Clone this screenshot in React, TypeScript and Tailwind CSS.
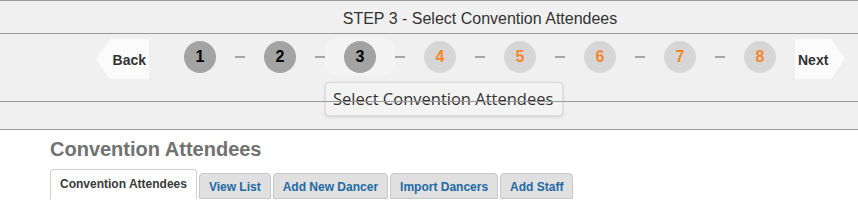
import React from 'react';

const steps = [1, 2, 3, 4, 5, 6, 7, 8];
const current = 3;

const tabs = ['Convention Attendees', 'View List', 'Add New Dancer', 'Import Dancers', 'Add Staff'];

function StepCircle({ n }: { n: number }) {
  const done = n <= current;
  const circle = (
    <div
      className={
        done
          ? 'w-[32px] h-[32px] rounded-full bg-[#a3a3a3] text-black flex items-center justify-center text-[16px] font-bold'
          : 'w-[32px] h-[32px] rounded-full bg-[#d6d6d6] text-[#f7862b] flex items-center justify-center text-[16px] font-bold'
      }
    >
      {n}
    </div>
  );
  if (n === current) {
    return (
      <div className="-mx-[19px] -my-[3px] px-[19px] py-[3px] rounded-xl bg-[#f4f4f4]">{circle}</div>
    );
  }
  return circle;
}

function Wizard() {
  return (
    <div className="relative bg-[#f0f0f0] border-t border-b border-[#999]">
      <div className="h-[33px] pt-[9px] pl-[102px] flex justify-center text-[16px] leading-[18px] text-[#333] border-b border-[#999]">
        STEP 3 - Select Convention Attendees
      </div>
      <div className="relative z-10 h-[68px] border-b border-[#999] pl-[96px] pt-[5px] flex items-start">
        <div className="w-[53px] h-[40px] bg-[#fbfbfb] [clip-path:polygon(14px_0,100%_0,100%_100%,14px_100%,0_50%)] flex items-center justify-end pr-[3px] pt-[2px] text-[14px] font-bold text-[#333]">
          Back
        </div>
        <div className="ml-[35px] mt-[2px] flex items-center">
          {steps.map((n, i) => (
            <React.Fragment key={n}>
              {i > 0 && <div className="mx-[19px] w-[10px] h-[2px] bg-[#a5a5a5]" />}
              <StepCircle n={n} />
            </React.Fragment>
          ))}
        </div>
        <div className="ml-[19px] w-[50px] h-[40px] bg-[#fbfbfb] [clip-path:polygon(0_0,36px_0,100%_50%,36px_100%,0_100%)] flex items-center pl-[3px] pt-[2px] text-[14px] font-bold text-[#333]">
          Next
        </div>
      </div>
      <div className="h-[27px]" />
      <div className="absolute left-[325px] top-[81px] w-[238px] h-[34px] rounded-[4px] bg-[#f3f3f3] border border-[#dcdcdc] shadow-[0_1px_3px_rgba(0,0,0,0.15)] pl-[7px] pt-[5px] text-[16.5px] leading-[22px] text-[#333] font-['Open_Sans',sans-serif] whitespace-nowrap">
        Select Convention Attendees
      </div>
    </div>
  );
}

export default function App() {
  return (
    <div className="w-[858px] h-[216px] bg-white overflow-hidden font-['Liberation_Sans',Arial,sans-serif]">
      <Wizard />
      <div className="pl-[50px] pt-[7px]">
        <h1 className="text-[20px] leading-[24px] font-bold text-[#717171]">Convention Attendees</h1>
        <div className="mt-[8px] flex items-end gap-[2px]">
          {tabs.map((t, i) =>
            i === 0 ? (
              <div
                key={t}
                className="px-[9px] pt-[7px] pb-[8px] leading-[14px] text-[12px] font-bold text-[#3a3a3a] bg-white border border-b-0 border-[#cfcfcf] rounded-t-[4px]"
              >
                {t}
              </div>
            ) : (
              <div
                key={t}
                className="px-[9px] pt-[6px] pb-[4px] leading-[14px] text-[12px] font-bold text-[#1d69a4] bg-[#e0e0e0] border border-[#c8c8c8] rounded-t-[4px]"
              >
                {t}
              </div>
            ),
          )}
        </div>
      </div>
    </div>
  );
}
